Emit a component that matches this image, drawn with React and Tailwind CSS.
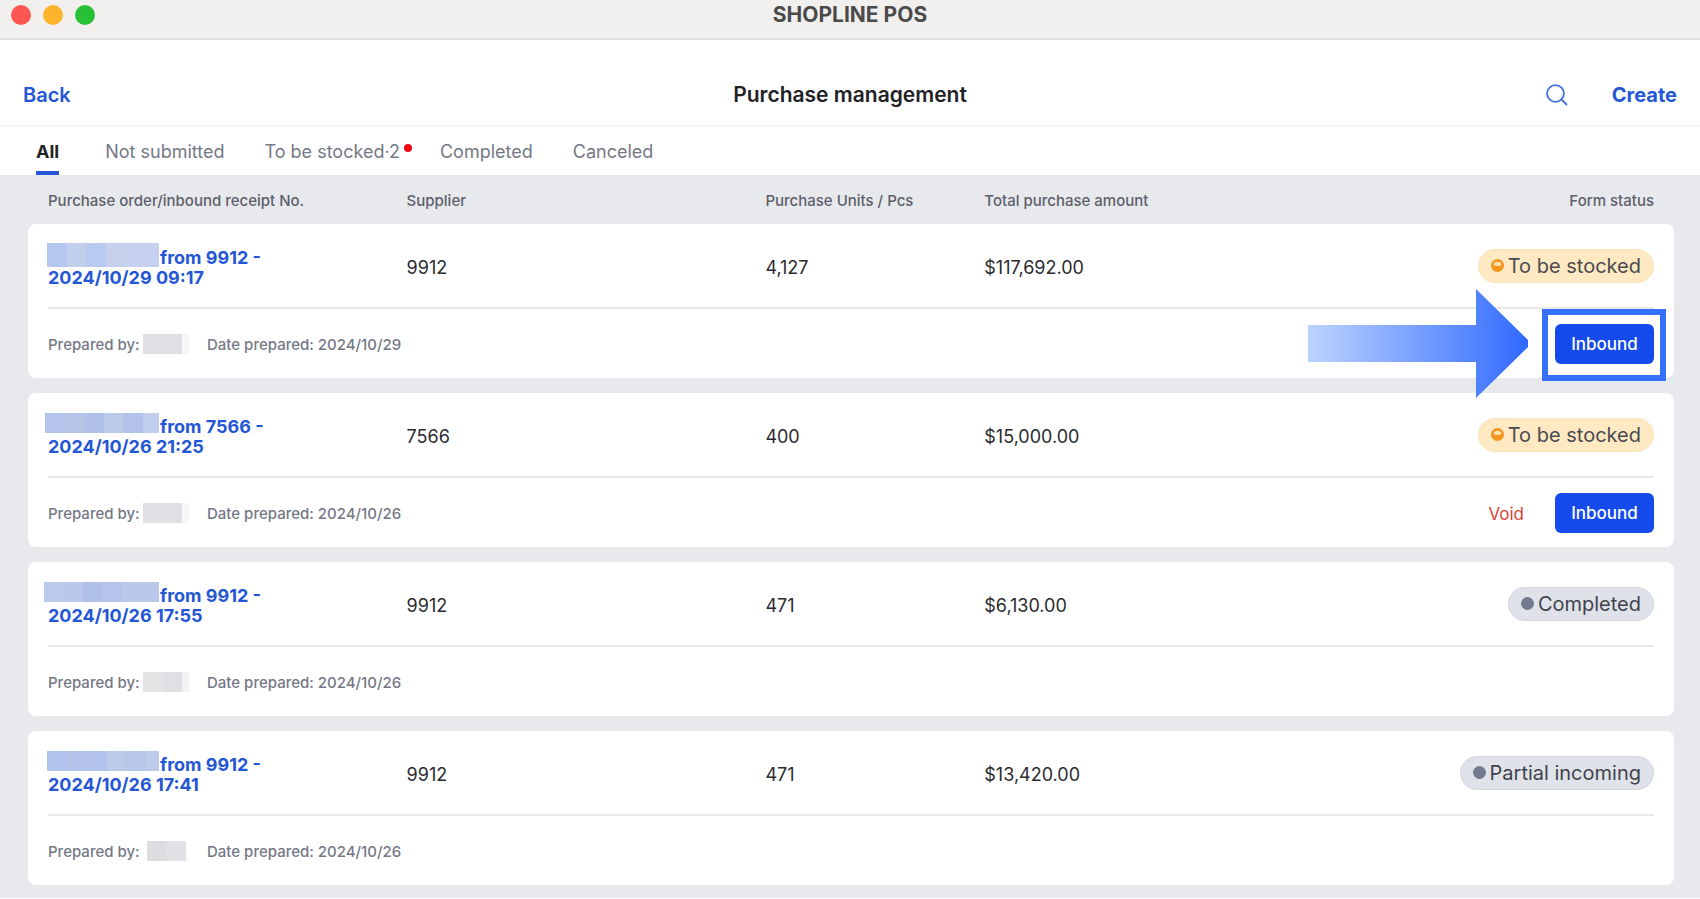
import React from 'react';
import clsx from 'clsx';

const tabs = [
  { label: 'All', active: true },
  { label: 'Not submitted' },
  { label: 'To be stocked·2', dot: true },
  { label: 'Completed' },
  { label: 'Canceled' },
];

const orders = [
  {
    id: 1,
    mask: ['w-5 bg-[#b5c7ef]', 'w-[19px] bg-[#c2cfec]', 'w-5 bg-[#b9caf0]', 'w-5 bg-[#c6d2ed]', 'w-[33px] bg-[#c5d1ee]'],
    maskSize: '-mt-px h-6',
    nameMask: ['w-[39px] bg-[#dfe0e4]', 'w-[7px] bg-[#f7f7f9]'],
    supplier: '9912',
    date: '2024/10/29',
    time: '09:17',
    units: '4,127',
    amount: '$117,692.00',
    status: 'To be stocked',
    canInbound: true,
    highlighted: true,
  },
  {
    id: 2,
    mask: ['w-5 bg-[#b4c4ea]', 'w-[19px] bg-[#b7c6e8]', 'w-5 bg-[#b1c1ea]', 'w-[19px] bg-[#bbcae8]', 'w-5 bg-[#b2c2e9]', 'w-4 bg-[#c1ceec]'],
    nameMask: ['w-[39px] bg-[#dfe0e4]', 'w-[7px] bg-[#f7f7f9]'],
    supplier: '7566',
    date: '2024/10/26',
    time: '21:25',
    units: '400',
    amount: '$15,000.00',
    status: 'To be stocked',
    canInbound: true,
    canVoid: true,
  },
  {
    id: 3,
    mask: ['w-5 bg-[#bccaed]', 'w-[19px] bg-[#b9c8ec]', 'w-[19px] bg-[#aebfe8]', 'w-5 bg-[#b4c4ea]', 'w-[37px] bg-[#bac8ec]'],
    nameMask: ['w-5 bg-[#e4e4e6]', 'w-[19px] bg-[#dfe0e4]', 'w-[7px] bg-[#f2f2f4]'],
    supplier: '9912',
    date: '2024/10/26',
    time: '17:55',
    units: '471',
    amount: '$6,130.00',
    status: 'Completed',
  },
  {
    id: 4,
    mask: ['w-5 bg-[#b2c3ed]', 'w-[19px] bg-[#b4c4e9]', 'w-5 bg-[#b1c2ed]', 'w-5 bg-[#bccae9]', 'w-5 bg-[#b6c7e8]', 'w-[13px] bg-[#bccaec]'],
    nameMask: ['w-1 bg-white', 'w-5 bg-[#dcdde1]', 'w-[19px] bg-[#e1e2e6]'],
    supplier: '9912',
    date: '2024/10/26',
    time: '17:41',
    units: '471',
    amount: '$13,420.00',
    status: 'Partial incoming',
  },
];

function Mask({ blocks, size = 'h-5' }) {
  return (
    <span className={clsx('flex shrink-0', size)} aria-hidden="true">
      {blocks.map((block, i) => (
        <span key={i} className={clsx('h-full shrink-0', block)} />
      ))}
    </span>
  );
}

function StatusBadge({ status }) {
  const pending = status === 'To be stocked';
  return (
    <span
      className={clsx(
        'inline-flex h-[34px] items-center gap-1 rounded-full border px-3 text-xl whitespace-nowrap',
        pending ? 'border-[#fbe3b8] bg-[#ffe9c2] text-[#4a4a4f]' : 'border-[#d3d6dd] bg-[#dfe2e8] text-[#3f434d]'
      )}
    >
      <svg className="size-[13px]" viewBox="0 0 13 13" aria-hidden="true">
        <circle cx="6.5" cy="6.5" r="6.5" fill={pending ? '#f7941d' : '#747b90'} />
        {pending && <path d="M2.6 6.2a3.9 3.4 0 0 1 7.8 0q-3.9 1.6-7.8 0z" fill="#ffe3b5" />}
      </svg>
      {status}
    </span>
  );
}

function Arrow({ className }) {
  return (
    <svg className={className} width="220" height="110" viewBox="0 0 220 110" aria-hidden="true">
      <defs>
        <linearGradient id="arrow-fill" x1="0" x2="1" y1="0" y2="0">
          <stop offset="0" stopColor="#bdd3ff" />
          <stop offset="0.8" stopColor="#4d80ff" />
          <stop offset="1" stopColor="#2f68ff" />
        </linearGradient>
      </defs>
      <path d="M0 36H168V0L220 51V58L168 109V73H0Z" fill="url(#arrow-fill)" />
    </svg>
  );
}

function InboundButton({ highlighted }) {
  return (
    <div className="relative">
      <button
        type="button"
        className="block h-10 w-[99px] rounded-md bg-[#154bec] pt-0.5 text-[17px] font-medium text-white"
      >
        Inbound
      </button>
      {highlighted && (
        <>
          <div className="pointer-events-none absolute -top-[15px] -right-3 -bottom-[17px] -left-[13px] border-6 border-[#3670ff]" />
          <Arrow className="pointer-events-none absolute -top-[35px] right-[126px] max-w-none" />
        </>
      )}
    </div>
  );
}

function OrderCard({ order }) {
  return (
    <tbody className="group">
      <tr className="h-[83px] text-lg text-[#2b2b2f]">
        <td className="rounded-tl-lg bg-white pt-1 pr-0 pb-0 pl-5">
          <a href="#" className="block leading-5 font-bold text-[#2457d6]">
            <span className="flex h-5 items-start">
              <span className="-mt-1 flex w-[111px] shrink-0 justify-end">
                <Mask blocks={order.mask} size={order.maskSize} />
              </span>
              <span className="pl-px whitespace-nowrap">from {order.supplier} -</span>
            </span>
            <span className="block whitespace-nowrap">
              {order.date} {order.time}
            </span>
          </a>
        </td>
        <td className="bg-white p-0 pt-1">{order.supplier}</td>
        <td className="bg-white p-0 pt-1">{order.units}</td>
        <td className="bg-white p-0 pt-1">{order.amount}</td>
        <td className="rounded-tr-lg bg-white py-0 pr-5 pl-0">
          <div className="flex justify-end">
            <StatusBadge status={order.status} />
          </div>
        </td>
      </tr>
      <tr>
        <td colSpan={5} className="p-0 pb-[15px] group-last:pb-3">
          <div className="rounded-b-lg bg-white px-5">
            <div className="flex h-[71px] items-center border-t-2 border-[#e8e9eb] text-[15px] font-medium text-[#747886]">
              <div className="flex w-[159px] items-center gap-[3px]">
                <span className="pt-1 whitespace-nowrap">Prepared by:</span>
                <Mask blocks={order.nameMask} />
              </div>
              <span className="pt-1">Date prepared: {order.date}</span>
              <div className="ml-auto flex items-center gap-[31px]">
                {order.canVoid && (
                  <button type="button" className="pt-1 text-[17px] font-normal text-[#dc4437]">
                    Void
                  </button>
                )}
                {order.canInbound && <InboundButton highlighted={order.highlighted} />}
              </div>
            </div>
          </div>
        </td>
      </tr>
    </tbody>
  );
}

export default function App() {
  return (
    <div className="min-h-screen bg-white font-['Inter','Liberation_Sans',sans-serif]">
      <div className="grid h-10 grid-cols-[1fr_auto_1fr] items-start border-b-2 border-[#e2e2e1] bg-[#f1f0ee]">
        <div className="flex gap-3 pt-[5px] pl-[11px]">
          <span className="size-5 rounded-full bg-[#fe5650]" />
          <span className="size-5 rounded-full bg-[#fdb32a]" />
          <span className="size-5 rounded-full bg-[#28c135]" />
        </div>
        <span className="text-[21px] leading-[30px] font-bold text-[#4b4b4b]">SHOPLINE POS</span>
      </div>

      <header className="grid h-[87px] grid-cols-[1fr_auto_1fr] items-center border-b-2 border-[#f3f4f6] px-[23px] pt-6">
        <a href="#" className="justify-self-start text-xl font-semibold text-[#2457d6]">
          Back
        </a>
        <h1 className="text-[21px] font-semibold text-[#222226]">Purchase management</h1>
        <div className="flex items-center justify-end gap-11">
          <button type="button" aria-label="Search" className="text-[#4270e0]">
            <svg className="size-[22px]" viewBox="0 0 22 22" fill="none" stroke="currentColor" strokeWidth="1.8">
              <circle cx="9.5" cy="9.5" r="8.4" />
              <path d="M15.5 15.5L21 21" />
            </svg>
          </button>
          <button type="button" className="text-xl font-bold text-[#2457d6]">
            Create
          </button>
        </div>
      </header>

      <nav className="flex h-12 gap-10 pl-9">
        {tabs.map((tab) => (
          <button
            key={tab.label}
            type="button"
            className={clsx(
              'relative border-b-4 pt-1.5 text-lg whitespace-nowrap',
              tab.active ? 'mr-1.5 border-[#2457d6] font-bold text-[#222226]' : 'border-transparent text-[#747986]'
            )}
          >
            {tab.label}
            {tab.dot && <span className="absolute top-[17px] -right-3 size-2 rounded-full bg-[#ee0a12]" />}
          </button>
        ))}
      </nav>

      <main className="bg-[#e8e9ed] pr-[26px] pb-px pl-7">
        <table className="w-full table-fixed border-separate border-spacing-0 text-left">
          <colgroup>
            <col className="w-[23%]" />
            <col className="w-[21.8%]" />
            <col className="w-[13.3%]" />
            <col className="w-[21%]" />
            <col />
          </colgroup>
          <thead>
            <tr className="h-[49px] text-[15px] text-[#5c606a]">
              <th className="pt-1 pr-0 pb-0 pl-5 font-medium">Purchase order/inbound receipt No.</th>
              <th className="p-0 pt-1 font-medium">Supplier</th>
              <th className="p-0 pt-1 font-medium">Purchase Units / Pcs</th>
              <th className="p-0 pt-1 font-medium">Total purchase amount</th>
              <th className="pt-1 pr-5 pb-0 pl-0 text-right font-medium">Form status</th>
            </tr>
          </thead>
          {orders.map((order) => (
            <OrderCard key={order.id} order={order} />
          ))}
        </table>
      </main>
    </div>
  );
}
